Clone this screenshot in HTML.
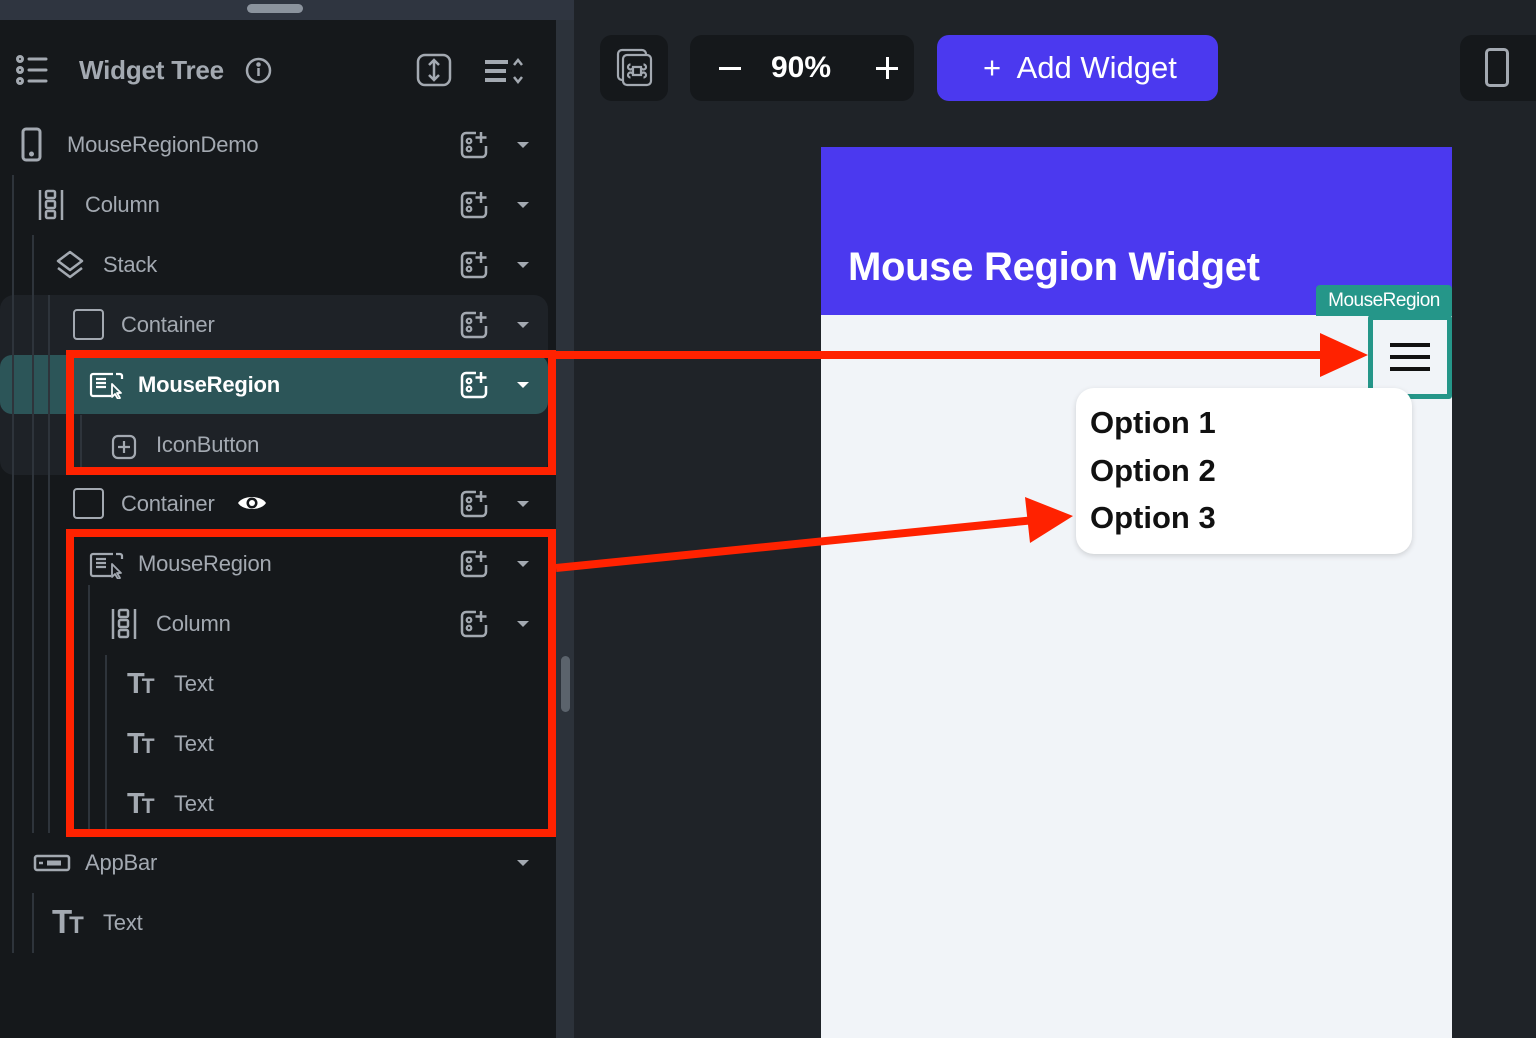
<!DOCTYPE html>
<html><head><meta charset="utf-8"><style>
*{margin:0;padding:0;box-sizing:border-box}
body{width:1536px;height:1038px;overflow:hidden;background:#1f2328;font-family:"Liberation Sans",sans-serif;position:relative}
.abs{position:absolute}
.t{position:absolute;font-size:22px;color:#a3a9b1;line-height:30px;letter-spacing:-0.2px}
.tt{position:absolute;font-size:29px;font-weight:bold;color:#a3a9b1;line-height:30px;letter-spacing:-3px}
.tt span{font-size:21px}
.add{position:absolute;left:459px;width:30px;height:30px}
.car{position:absolute;left:517px;width:0;height:0;border-left:6px solid transparent;border-right:6px solid transparent;border-top:6px solid #a3a9b1}
.vl{position:absolute;width:2px;background:#2e343b}
.rb{position:absolute;border:8px solid #ff2200}
</style></head><body>
<div class="abs" style="left:0;top:0;width:574px;height:20px;background:#2f3540"></div>
<div class="abs" style="left:247px;top:4px;width:56px;height:9px;border-radius:5px;background:#8b939d"></div>
<div class="abs" style="left:0;top:20px;width:556px;height:1018px;background:#15181b"></div>
<div class="abs" style="left:556px;top:20px;width:18px;height:1018px;background:#2c323a"></div>
<div class="abs" style="left:561px;top:656px;width:9px;height:56px;border-radius:5px;background:#5b636c"></div>

<svg class="abs" style="left:14px;top:55px" width="36" height="30" viewBox="0 0 36 30" fill="none" stroke="#a3a9b1" stroke-width="3"><circle cx="6" cy="4" r="2.5"/><circle cx="6" cy="15" r="2.5"/><circle cx="6" cy="26" r="2.5"/><path d="M15 4H32M15 15H32M15 26H32" stroke-linecap="round"/></svg>
<div class="t" style="left:79px;top:55px;font-size:26px;font-weight:bold;color:#a3a9b1">Widget Tree</div>
<svg class="abs" style="left:245px;top:57px" width="27" height="27" viewBox="0 0 27 27" fill="none" stroke="#a3a9b1" stroke-width="2.5"><circle cx="13.5" cy="13.5" r="11.5"/><path d="M13.5 11v8"/><circle cx="13.5" cy="7.5" r="1" fill="#a3a9b1"/></svg>
<svg class="abs" style="left:416px;top:53px" width="36" height="34" viewBox="0 0 36 34" fill="none" stroke="#a3a9b1" stroke-width="2.5"><rect x="2" y="2" width="32" height="30" rx="7"/><path d="M18 7v20M13 12l5-5 5 5M13 22l5 5 5-5"/></svg>
<svg class="abs" style="left:482px;top:56px" width="44" height="30" viewBox="0 0 44 30" fill="none" stroke="#a3a9b1"><path d="M3 6H26M3 15H24M3 24H24" stroke-width="4"/><path d="M32 9l4-5 4 5M32 21l4 5 4-5" stroke-width="2.5"/></svg>

<div class="abs" style="left:0;top:295px;width:548px;height:180px;border-radius:14px;background:#1e2227"></div>
<div class="abs" style="left:0;top:355px;width:548px;height:59px;border-radius:12px;background:#2c5558"></div>

<div class="vl" style="left:12px;top:175px;height:778px"></div>
<div class="vl" style="left:32px;top:235px;height:598px"></div>
<div class="vl" style="left:48px;top:295px;height:538px"></div>
<div class="vl" style="left:80px;top:415px;height:58px"></div>
<div class="vl" style="left:88px;top:585px;height:245px"></div>
<div class="vl" style="left:105px;top:655px;height:175px"></div>
<div class="vl" style="left:32px;top:893px;height:60px"></div>

<svg class="abs" style="left:20px;top:127px" width="24" height="36" viewBox="0 0 24 36" fill="none" stroke="#a3a9b1" stroke-width="3"><rect x="3" y="2" width="17" height="31" rx="3"/><circle cx="11.5" cy="27" r="1" fill="#a3a9b1"/></svg>
<div class="t" style="left:67px;top:130px">MouseRegionDemo</div>

<svg class="abs" style="left:37px;top:188px" width="28" height="34" viewBox="0 0 28 34" fill="none" stroke="#a3a9b1" stroke-width="2.5"><path d="M3 2v30M25 2v30"/><rect x="9" y="3" width="9" height="7" rx="1.5"/><rect x="9" y="13" width="9" height="7" rx="1.5"/><rect x="9" y="23" width="9" height="7" rx="1.5"/></svg>
<div class="t" style="left:85px;top:190px">Column</div>

<svg class="abs" style="left:54px;top:249px" width="32" height="32" viewBox="0 0 32 32" fill="none" stroke="#a3a9b1" stroke-width="2.5" stroke-linejoin="round"><path d="M16 3L28 12 16 21 4 12Z"/><path d="M4 19l12 9 12-9"/></svg>
<div class="t" style="left:103px;top:250px">Stack</div>

<div class="abs" style="left:73px;top:309px;width:31px;height:31px;border:2.5px solid #a3a9b1;border-radius:4px"></div>
<div class="t" style="left:121px;top:310px">Container</div>

<svg class="abs" style="left:89px;top:371px" width="36" height="28" viewBox="0 0 36 28" fill="none" stroke="#fff" stroke-width="2.2"><path d="M24 3H4a2 2 0 0 0-2 2v18a2 2 0 0 0 2 2h18"/><path d="M27 3h4a2 2 0 0 1 2 2v3"/><path d="M7 8h10M7 12h10M7 16h10"/><path d="M23 13v13l3-3 3 5 2-1-3-5h4z" stroke-width="1.8" stroke-linejoin="round"/></svg>
<div class="t" style="left:138px;top:370px;color:#fff;font-weight:bold">MouseRegion</div>

<svg class="abs" style="left:111px;top:434px" width="26" height="26" viewBox="0 0 26 26" fill="none" stroke="#a3a9b1" stroke-width="2.2"><rect x="2" y="2" width="22" height="22" rx="5"/><path d="M13 7v12M7 13h12"/></svg>
<div class="t" style="left:156px;top:430px">IconButton</div>

<div class="abs" style="left:73px;top:488px;width:31px;height:31px;border:2.5px solid #a3a9b1;border-radius:4px"></div>
<div class="t" style="left:121px;top:489px">Container</div>
<svg class="abs" style="left:236px;top:492px" width="32" height="22" viewBox="0 0 32 22"><path d="M2 11C7 3 25 3 30 11 25 19 7 19 2 11Z" fill="#fff"/><circle cx="16" cy="11" r="5.5" fill="#15181b"/><circle cx="16" cy="11" r="3" fill="#fff"/></svg>

<svg class="abs" style="left:89px;top:551px" width="36" height="28" viewBox="0 0 36 28" fill="none" stroke="#a3a9b1" stroke-width="2.2"><path d="M24 3H4a2 2 0 0 0-2 2v18a2 2 0 0 0 2 2h18"/><path d="M27 3h4a2 2 0 0 1 2 2v3"/><path d="M7 8h10M7 12h10M7 16h10"/><path d="M23 13v13l3-3 3 5 2-1-3-5h4z" stroke-width="1.8" stroke-linejoin="round"/></svg>
<div class="t" style="left:138px;top:549px">MouseRegion</div>

<svg class="abs" style="left:110px;top:607px" width="28" height="34" viewBox="0 0 28 34" fill="none" stroke="#a3a9b1" stroke-width="2.5"><path d="M3 2v30M25 2v30"/><rect x="9" y="3" width="9" height="7" rx="1.5"/><rect x="9" y="13" width="9" height="7" rx="1.5"/><rect x="9" y="23" width="9" height="7" rx="1.5"/></svg>
<div class="t" style="left:156px;top:609px">Column</div>

<div class="tt" style="left:127px;top:669px">T<span>T</span></div>
<div class="t" style="left:174px;top:669px">Text</div>
<div class="tt" style="left:127px;top:729px">T<span>T</span></div>
<div class="t" style="left:174px;top:729px">Text</div>
<div class="tt" style="left:127px;top:789px">T<span>T</span></div>
<div class="t" style="left:174px;top:789px">Text</div>

<svg class="abs" style="left:33px;top:853px" width="38" height="20" viewBox="0 0 38 20" fill="none" stroke="#a3a9b1" stroke-width="2.5"><rect x="2" y="3" width="34" height="14" rx="2"/><path d="M14 10h14" stroke-width="5"/><path d="M6 10h4"/></svg>
<div class="t" style="left:85px;top:848px">AppBar</div>

<div class="tt" style="left:52px;top:907px;font-size:33px">T<span style="font-size:24px">T</span></div>
<div class="t" style="left:103px;top:908px">Text</div>

<svg width="0" height="0" style="position:absolute"><defs><symbol id="ad" viewBox="0 0 30 30"><path d="M17 3H7a4 4 0 0 0-4 4v16a4 4 0 0 0 4 4h16a4 4 0 0 0 4-4v-7" fill="none" stroke-width="2.5"/><circle cx="10" cy="11" r="2.3" fill="none" stroke-width="2.2"/><circle cx="10" cy="19" r="2.3" fill="none" stroke-width="2.2"/><path d="M22 2v11M16.5 7.5h11" stroke-width="2.5"/></symbol></defs></svg>
<svg class="add" style="top:130px" stroke="#a3a9b1"><use href="#ad"/></svg><div class="car" style="top:142px"></div>
<svg class="add" style="top:190px" stroke="#a3a9b1"><use href="#ad"/></svg><div class="car" style="top:202px"></div>
<svg class="add" style="top:250px" stroke="#a3a9b1"><use href="#ad"/></svg><div class="car" style="top:262px"></div>
<svg class="add" style="top:310px" stroke="#a3a9b1"><use href="#ad"/></svg><div class="car" style="top:322px"></div>
<svg class="add" style="top:370px" stroke="#fff"><use href="#ad"/></svg><div class="car" style="top:382px;border-top-color:#fff"></div>
<svg class="add" style="top:489px" stroke="#a3a9b1"><use href="#ad"/></svg><div class="car" style="top:501px"></div>
<svg class="add" style="top:549px" stroke="#a3a9b1"><use href="#ad"/></svg><div class="car" style="top:561px"></div>
<svg class="add" style="top:609px" stroke="#a3a9b1"><use href="#ad"/></svg><div class="car" style="top:621px"></div>
<div class="car" style="top:860px"></div>

<div class="abs" style="left:600px;top:35px;width:68px;height:66px;border-radius:12px;background:#15181b"></div>
<svg class="abs" style="left:616px;top:48px" width="38" height="40" viewBox="0 0 38 40" fill="none" stroke="#a3a9b1" stroke-width="2.2"><rect x="2" y="2" width="28" height="30" rx="4"/><rect x="7" y="7" width="28" height="30" rx="4" fill="#15181b"/><path d="M17 19h8v8h-8zM17 19a2.5 2.5 0 1 1 -2.5 -2.5M25 19a2.5 2.5 0 1 0 2.5 -2.5M17 27a2.5 2.5 0 1 0 -2.5 2.5M25 27a2.5 2.5 0 1 1 2.5 2.5"/></svg>
<div class="abs" style="left:690px;top:35px;width:224px;height:66px;border-radius:12px;background:#15181b"></div>
<div class="abs" style="left:719px;top:67px;width:22px;height:3px;background:#fff"></div>
<div class="abs" style="left:771px;top:50px;color:#fff;font-size:30px;font-weight:bold;line-height:36px">90%</div>
<div class="abs" style="left:876px;top:67px;width:22px;height:3px;background:#fff"></div>
<div class="abs" style="left:886px;top:57px;width:3px;height:22px;background:#fff"></div>
<div class="abs" style="left:937px;top:35px;width:281px;height:66px;border-radius:12px;background:#4b39ef"></div>
<div class="abs" style="left:983px;top:49px;color:#fff;font-size:31px;line-height:38px">+&nbsp; Add Widget</div>
<div class="abs" style="left:1460px;top:35px;width:90px;height:66px;border-radius:12px;background:#15181b"></div>
<div class="abs" style="left:1485px;top:48px;width:24px;height:39px;border:3px solid #a3a9b1;border-radius:5px"></div>

<div class="abs" style="left:821px;top:147px;width:631px;height:891px;background:#f1f4f8"></div>
<div class="abs" style="left:821px;top:147px;width:631px;height:168px;background:#4b39ef"></div>
<div class="abs" style="left:848px;top:243px;color:#fff;font-size:40px;font-weight:bold;line-height:48px;letter-spacing:-0.3px">Mouse Region Widget</div>
<div class="abs" style="left:1316px;top:285px;width:136px;height:31px;background:#259689;border-radius:4px 4px 0 0;color:#fff;font-size:19px;line-height:31px;text-align:center;letter-spacing:-0.5px">MouseRegion</div>
<div class="abs" style="left:1368px;top:315px;width:84px;height:84px;border:5px solid #259689;border-radius:3px"></div>
<div class="abs" style="left:1390px;top:343px;width:40px;height:4px;background:#111"></div>
<div class="abs" style="left:1390px;top:355px;width:40px;height:4px;background:#111"></div>
<div class="abs" style="left:1390px;top:367px;width:40px;height:4px;background:#111"></div>

<div class="abs" style="left:1076px;top:388px;width:336px;height:166px;background:#fff;border-radius:18px;box-shadow:0 2px 6px rgba(0,0,0,0.15)"></div>
<div class="abs" style="left:1090px;top:399px;color:#111;font-size:31px;font-weight:bold;line-height:47.5px">Option 1<br>Option 2<br>Option 3</div>

<div class="rb" style="left:66px;top:350px;width:490px;height:125px"></div>
<div class="rb" style="left:66px;top:529px;width:490px;height:308px"></div>
<svg class="abs" style="left:0;top:0" width="1536" height="1038">
<path d="M556 355H1325" stroke="#ff2200" stroke-width="8"/>
<path d="M1320 333L1368 355 1320 377Z" fill="#ff2200"/>
<path d="M556 568L1035 520" stroke="#ff2200" stroke-width="8"/>
<path d="M1025 497L1073 516 1030 543Z" fill="#ff2200"/>
</svg>
</body></html>
